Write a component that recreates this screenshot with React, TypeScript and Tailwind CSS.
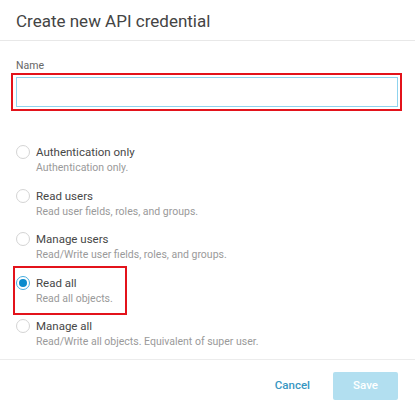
const options = [
  { label: "Authentication only", desc: "Authentication only.", selected: false, marked: false },
  { label: "Read users", desc: "Read user fields, roles, and groups.", selected: false, marked: false },
  { label: "Manage users", desc: "Read/Write user fields, roles, and groups.", selected: false, marked: false },
  { label: "Read all", desc: "Read all objects.", selected: true, marked: true },
  { label: "Manage all", desc: "Read/Write all objects. Equivalent of super user.", selected: false, marked: false },
];

function Radio({ selected }: { selected: boolean }) {
  if (selected) {
    return (
      <span className="flex h-[14px] w-[14px] shrink-0 items-center justify-center rounded-full border-[1.5px] border-[#45ade0] bg-white">
        <span className="h-[8px] w-[8px] rounded-full bg-[#0a8bcd]" />
      </span>
    );
  }
  return <span className="h-[14px] w-[14px] shrink-0 rounded-full border border-[#d4d4d4] bg-white" />;
}

export default function App() {
  return (
    <main className="flex h-[412px] w-[415px] flex-col bg-white font-['Roboto','Liberation_Sans',sans-serif]">
      <header className="flex h-[41px] items-center border-b border-[#e8e8e8] px-4 pt-[1px]">
        <h1 className="text-[17px] leading-6 text-[#444]">Create new API credential</h1>
      </header>

      <section className="flex flex-col px-4 pt-[17px]">
        <label className="mb-[3px] text-[10.5px] leading-4 text-[#666]">Name</label>
        <div className="relative">
          <input
            type="text"
            className="block h-[30px] w-[382px] border border-[#8fd3ee] bg-white outline-none"
          />
          <div className="pointer-events-none absolute -top-[4px] -bottom-[4px] -left-[5px] right-[-3px] border-2 border-[#e3131b]" />
        </div>

        <div className="mt-[37px] flex flex-col gap-[12.5px]">
          {options.map((o) => (
            <div key={o.label} className="relative flex flex-col">
              <div className="flex h-4 items-center gap-[6px]">
                <Radio selected={o.selected} />
                <span className="text-[11.5px] leading-4 text-[#474747]">{o.label}</span>
              </div>
              <p className="mt-[1px] pl-5 text-[10.5px] leading-[14px] text-[#9a9a9a]">{o.desc}</p>
              {o.marked && (
                <div className="pointer-events-none absolute -top-[9px] -bottom-[9px] -left-[3px] w-[114px] border-2 border-[#e3131b]" />
              )}
            </div>
          ))}
        </div>
      </section>

      <footer className="mt-[10px] flex items-center justify-end gap-[23px] border-t border-[#ececec] px-[17px] pt-[12px]">
        <button className="text-[11.5px] font-medium text-[#3797c2]">Cancel</button>
        <button className="h-[28px] w-[65px] rounded-[2px] bg-[#b2dff0] text-[11.5px] font-medium text-white">
          Save
        </button>
      </footer>
    </main>
  );
}
